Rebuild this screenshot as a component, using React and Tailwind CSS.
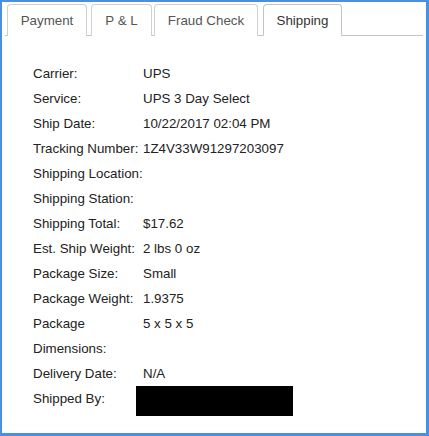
import React from "react";

const rows = [
  ["Carrier:", "UPS"],
  ["Service:", "UPS 3 Day Select"],
  ["Ship Date:", "10/22/2017 02:04 PM"],
  ["Tracking Number:", "1Z4V33W91297203097"],
  ["Shipping Location:", ""],
  ["Shipping Station:", ""],
  ["Shipping Total:", "$17.62"],
  ["Est. Ship Weight:", "2 lbs 0 oz"],
  ["Package Size:", "Small"],
  ["Package Weight:", "1.9375"],
  ["Package Dimensions:", "5 x 5 x 5"],
  ["Delivery Date:", "N/A"],
];

export default function App() {
  return (
    <div className="w-[429px] h-[436px] box-border border-l-2 border-t-2 border-r-[3px] border-b-[3px] border-[#4a90e2] bg-white font-['Liberation_Sans',Arial,sans-serif] text-[13.33px] overflow-hidden">
      <div className="mt-[3px] ml-[3px] mr-[3px] pl-[2px] flex items-end h-[31px] border-b border-[#c4c4c4]">
        <div className="w-[80px] h-[32px] -mb-px mr-[4px] pt-px flex items-center justify-center border border-[#d0d0d0] border-b-0 rounded-t-[4px] bg-white text-[#555]">
          Payment
        </div>
        <div className="w-[61px] h-[32px] -mb-px mr-[2px] pt-px flex items-center justify-center border border-[#d0d0d0] border-b-0 rounded-t-[4px] bg-white text-[#555]">
          P &amp; L
        </div>
        <div className="w-[104px] h-[32px] -mb-px mr-[5px] pt-px flex items-center justify-center border border-[#d0d0d0] border-b-0 rounded-t-[4px] bg-white text-[#555]">
          Fraud Check
        </div>
        <div className="w-[79px] h-[32px] -mb-px pt-px flex items-center justify-center border border-[#c4c4c4] border-b-white rounded-t-[4px] bg-white text-[#333]">
          Shipping
        </div>
      </div>
      <div className="pl-[31px] pt-[25px] grid grid-cols-[110px_auto] leading-[25px] text-[#222]">
        {rows.map(([k, v]) => (
          <React.Fragment key={k}>
            <div>{k}</div>
            <div>{v}</div>
          </React.Fragment>
        ))}
        <div>Shipped By:</div>
        <div>
          <div className="-ml-[7px] w-[157px] h-[30px] bg-black" />
        </div>
      </div>
    </div>
  );
}
